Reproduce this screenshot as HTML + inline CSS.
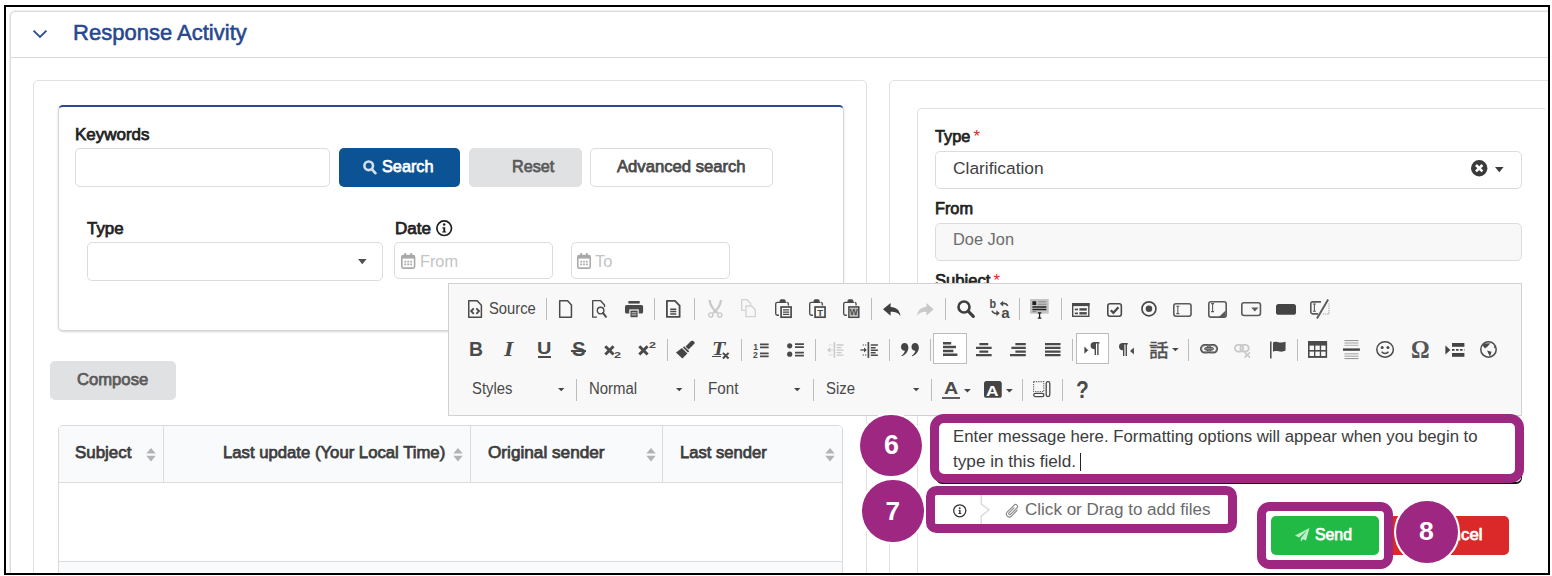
<!DOCTYPE html>
<html lang="en"><head><meta charset="utf-8"><title>Response Activity</title>
<style>
html,body{margin:0;padding:0;background:#fff;}
body{width:1552px;height:576px;overflow:hidden;position:relative;font-family:"Liberation Sans",sans-serif;}
#frame{position:absolute;left:4px;top:5px;width:1546px;height:570px;box-sizing:border-box;border:2px solid #000;z-index:50;pointer-events:none;}
#clip{position:absolute;left:0;top:0;width:1549px;height:574px;overflow:hidden;}
#clip div{position:absolute;box-sizing:border-box;}
.t{position:absolute;white-space:nowrap;line-height:1;display:inline-block;transform-origin:0 50%;}
.i{position:absolute;overflow:visible;}
.card{border:1px solid #e1e1e1;border-radius:5px;background:#fff;}
.inp{border:1px solid #dcdcdc;border-radius:5px;background:#fff;}
.btn{border-radius:5px;}
.sep{background:#bcbcbc;width:1px;}
.on{background:#fff;border:1px solid #bcbcbc;}
.ann{border:9px solid #9d2781;border-radius:10.5px;}
.circ{border-radius:50%;background:#9d2781;box-shadow:0 0 0 2px #fff;}
</style></head><body><div id="clip">
<div style="left:10.00px;top:11.00px;width:1590.00px;height:689.00px;border:1px solid #dcdcdc;border-radius:5px;box-shadow:0 0 0 1px #f0f0f0;background:#fff;"></div>
<div style="left:11.00px;top:57.00px;width:1589.00px;height:1.00px;background:#d9d9d9;"></div>
<svg class="i" style="left:32px;top:29px;width:16px;height:10px" viewBox="0 0 16 10"><path d="M1.5 1.6 L8 8 L14.5 1.6" fill="none" stroke="#34508f" stroke-width="1.9"/></svg>
<span id="title" class="t" style="left:72.80px;top:21.63px;font-size:21.7px;color:#27488f;transform:scaleX(1.0151);-webkit-text-stroke:0.55px #27488f;">Response Activity</span>
<div class="card" style="left:33.00px;top:80.00px;width:834.00px;height:620.00px;"></div>
<div style="left:57.50px;top:105.00px;width:786.00px;height:226.00px;border:1px solid #d6d6d6;border-top:2px solid #2a4893;border-radius:5px;box-shadow:0 1px 2px rgba(34,36,38,.18);background:#fff;"></div>
<span id="kw" class="t" style="left:74.60px;top:126.78px;font-size:16.8px;color:#222;-webkit-text-stroke:0.75px #222;transform:scaleX(1.0110);">Keywords</span>
<div class="inp" style="left:75.00px;top:148.00px;width:255.00px;height:39.00px;"></div>
<div class="btn" style="left:338.75px;top:148.00px;width:121.25px;height:39.00px;background:#0b5394;"></div>
<svg class="i" style="left:362.50px;top:160.00px;width:13.80px;height:14.60px;color:#d3dfec;" viewBox="0 0 13.8 14.6" preserveAspectRatio="none"><circle cx="5.7" cy="5.8" r="4.3" fill="none" stroke="currentColor" stroke-width="2.6"/><path d="M9.2 9.6 L12.4 13.1" fill="none" stroke="currentColor" stroke-width="2.8" stroke-linecap="round"/></svg>
<span id="search" class="t" style="left:382.00px;top:159.18px;font-size:16.8px;color:#fff;-webkit-text-stroke:0.75px #fff;transform:scaleX(0.9686);">Search</span>
<div class="btn" style="left:468.75px;top:148.00px;width:113.25px;height:39.00px;background:#e0e1e2;"></div>
<span id="reset" class="t" style="left:511.60px;top:159.18px;font-size:16.8px;color:#5a5a5a;-webkit-text-stroke:0.75px #5a5a5a;transform:scaleX(0.9648);">Reset</span>
<div class="btn" style="left:590.00px;top:148.00px;width:183.00px;height:39.00px;background:#fff;border:1px solid #dcdcdc;"></div>
<span id="adv" class="t" style="left:616.60px;top:159.18px;font-size:16.8px;color:#4a4a4a;-webkit-text-stroke:0.75px #4a4a4a;transform:scaleX(0.9917);">Advanced search</span>
<span id="type1" class="t" style="left:86.80px;top:221.18px;font-size:16.8px;color:#222;-webkit-text-stroke:0.75px #222;transform:scaleX(1.0058);">Type</span>
<div class="inp" style="left:87.00px;top:242.00px;width:295.50px;height:38.50px;"></div>
<svg class="i" style="left:358.2px;top:259.4px;width:8.6px;height:5.2px" viewBox="0 0 10 6"><path d="M0 0H10L5 6Z" fill="#505050"/></svg>
<span id="date" class="t" style="left:395.20px;top:221.18px;font-size:16.8px;color:#222;-webkit-text-stroke:0.75px #222;transform:scaleX(1.0154);">Date</span>
<svg class="i" style="left:436.20px;top:219.80px;width:16.40px;height:16.40px;color:#1f1f1f;" viewBox="0 0 16.4 16.4" preserveAspectRatio="none"><circle cx="8.2" cy="8.2" r="7.3" fill="none" stroke="currentColor" stroke-width="1.7"/><circle cx="8.2" cy="4.6" r="1.25" fill="currentColor"/><path d="M6.4 7.2 H9.2 V11.4 H10.2 V12.6 H6.2 V11.4 H7.3 V8.4 H6.4 Z" fill="currentColor" /></svg>
<div class="inp" style="left:394.00px;top:242.00px;width:158.50px;height:37.00px;"></div>
<svg class="i" style="left:401.20px;top:253.00px;width:14.40px;height:15.90px;color:#a9a9a9;" viewBox="0 0 14.4 15.9" preserveAspectRatio="none"><rect x="0.8" y="2.6" width="12.8" height="12.5" rx="1.6" fill="none" stroke="currentColor" stroke-width="1.6"/><rect x="0.8" y="2.6" width="12.8" height="3" fill="currentColor"/><rect x="3.2" y="0" width="2" height="3.6" rx="0.8" fill="currentColor"/><rect x="9.2" y="0" width="2" height="3.6" rx="0.8" fill="currentColor"/><path d="M3.4 8.6 H11 M3.4 11.4 H11" stroke="currentColor" stroke-width="1.7" stroke-dasharray="1.8 1.1" fill="none"/></svg>
<span id="from_ph" class="t" style="left:419.60px;top:253.68px;font-size:16.8px;color:#c4c4c4;transform:scaleX(0.9705);">From</span>
<div class="inp" style="left:571.00px;top:242.00px;width:158.50px;height:37.00px;"></div>
<svg class="i" style="left:577.40px;top:253.00px;width:14.00px;height:15.90px;color:#a9a9a9;" viewBox="0 0 14.4 15.9" preserveAspectRatio="none"><rect x="0.8" y="2.6" width="12.8" height="12.5" rx="1.6" fill="none" stroke="currentColor" stroke-width="1.6"/><rect x="0.8" y="2.6" width="12.8" height="3" fill="currentColor"/><rect x="3.2" y="0" width="2" height="3.6" rx="0.8" fill="currentColor"/><rect x="9.2" y="0" width="2" height="3.6" rx="0.8" fill="currentColor"/><path d="M3.4 8.6 H11 M3.4 11.4 H11" stroke="currentColor" stroke-width="1.7" stroke-dasharray="1.8 1.1" fill="none"/></svg>
<span id="to_ph" class="t" style="left:595.20px;top:253.68px;font-size:16.8px;color:#c4c4c4;transform:scaleX(0.9811);">To</span>
<div class="btn" style="left:50.40px;top:361.00px;width:125.35px;height:38.50px;background:#e0e1e2;"></div>
<span id="compose" class="t" style="left:77.00px;top:372.18px;font-size:16.8px;color:#5a5a5a;-webkit-text-stroke:0.75px #5a5a5a;transform:scaleX(0.9913);">Compose</span>
<div style="left:58.00px;top:425.00px;width:785.00px;height:275.00px;border:1px solid #dadada;border-radius:5px;background:#fff;overflow:hidden;"><div style="left:0;top:0;width:100%;height:57px;background:#f9fafb;border-bottom:1px solid #dcdcdc"></div><div style="left:0;top:135px;width:100%;height:200px;background:#f9fafb;border-top:1px solid #dcdcdc"></div></div>
<div style="left:163.00px;top:426.00px;width:1.00px;height:57.00px;background:#dcdcdc;"></div>
<div style="left:470.00px;top:426.00px;width:1.00px;height:57.00px;background:#dcdcdc;"></div>
<div style="left:662.00px;top:426.00px;width:1.00px;height:57.00px;background:#dcdcdc;"></div>
<span id="th1" class="t" style="left:75.30px;top:445.48px;font-size:16.8px;color:#3d3d3d;-webkit-text-stroke:0.75px #3d3d3d;transform:scaleX(1.0074);">Subject</span>
<span id="th2" class="t" style="left:222.60px;top:445.48px;font-size:16.8px;color:#3d3d3d;-webkit-text-stroke:0.75px #3d3d3d;transform:scaleX(0.9952);">Last update (Your Local Time)</span>
<span id="th3" class="t" style="left:487.60px;top:445.48px;font-size:16.8px;color:#3d3d3d;-webkit-text-stroke:0.75px #3d3d3d;transform:scaleX(1.0245);">Original sender</span>
<span id="th4" class="t" style="left:680.20px;top:445.48px;font-size:16.8px;color:#3d3d3d;-webkit-text-stroke:0.75px #3d3d3d;transform:scaleX(0.9897);">Last sender</span>
<svg class="i" style="left:146.25px;top:448px;width:10px;height:13.4px" viewBox="0 0 10 13.4"><path d="M0.3 5.6H9.7L5 0Z M0.3 7.8H9.7L5 13.4Z" fill="#b3b3b3"/></svg>
<svg class="i" style="left:453.25px;top:448px;width:10px;height:13.4px" viewBox="0 0 10 13.4"><path d="M0.3 5.6H9.7L5 0Z M0.3 7.8H9.7L5 13.4Z" fill="#b3b3b3"/></svg>
<svg class="i" style="left:645.75px;top:448px;width:10px;height:13.4px" viewBox="0 0 10 13.4"><path d="M0.3 5.6H9.7L5 0Z M0.3 7.8H9.7L5 13.4Z" fill="#b3b3b3"/></svg>
<svg class="i" style="left:824.5px;top:448px;width:10px;height:13.4px" viewBox="0 0 10 13.4"><path d="M0.3 5.6H9.7L5 0Z M0.3 7.8H9.7L5 13.4Z" fill="#b3b3b3"/></svg>
<div class="card" style="left:889.00px;top:80.00px;width:811.00px;height:620.00px;"></div>
<div class="card" style="left:917.00px;top:108.00px;width:630.00px;height:592.00px;border-right-color:transparent;"></div>
<span id="type2" class="t" style="left:935.20px;top:129.18px;font-size:16.8px;color:#222;-webkit-text-stroke:0.75px #222;transform:scaleX(0.9728);">Type</span>
<span id="ast1" class="t" style="left:973.40px;top:128.78px;font-size:16.8px;color:#db2828;">*</span>
<div class="inp" style="left:935.00px;top:150.50px;width:586.75px;height:38.00px;"></div>
<span id="clar" class="t" style="left:952.80px;top:161.18px;font-size:16.8px;color:#3f3f3f;transform:scaleX(1.0334);">Clarification</span>
<svg class="i" style="left:1471.00px;top:160.00px;width:16.40px;height:16.40px;color:#3a3a3a;" viewBox="0 0 16.4 16.4" preserveAspectRatio="none"><circle cx="8.2" cy="8.2" r="8.2" fill="currentColor"/><path d="M5 5 L11.4 11.4 M11.4 5 L5 11.4" stroke="#fff" stroke-width="2.6"/></svg>
<svg class="i" style="left:1495.2px;top:167px;width:8.6px;height:5.4px" viewBox="0 0 10 6"><path d="M0 0H10L5 6Z" fill="#3c3c3c"/></svg>
<span id="from2" class="t" style="left:935.20px;top:200.98px;font-size:16.8px;color:#222;-webkit-text-stroke:0.75px #222;transform:scaleX(0.9705);">From</span>
<div class="inp" style="left:935.00px;top:222.50px;width:586.75px;height:38.00px;background:#f8f8f8;"></div>
<span id="doe" class="t" style="left:953.20px;top:232.48px;font-size:16.8px;color:#6c6c6c;transform:scaleX(0.9758);">Doe Jon</span>
<span id="subj2" class="t" style="left:935.20px;top:273.18px;font-size:16.8px;color:#222;-webkit-text-stroke:0.75px #222;transform:scaleX(0.9896);">Subject</span>
<span id="ast2" class="t" style="left:993.40px;top:272.78px;font-size:16.8px;color:#db2828;">*</span>
<div style="left:936.00px;top:420.00px;width:585.50px;height:63.50px;border:1px solid #111;border-radius:6px;background:#fff;border-width:1px 1px 2px 1px;"></div>
<div style="left:936.00px;top:496.00px;width:291.00px;height:27.00px;background:#fff;"></div>
<svg class="i" style="left:952.50px;top:503.60px;width:13.50px;height:13.50px;color:#333;" viewBox="0 0 13.4 13.5" preserveAspectRatio="none"><circle cx="6.7" cy="6.75" r="6" fill="none" stroke="currentColor" stroke-width="1.25"/><circle cx="6.7" cy="4.2" r="0.95" fill="currentColor"/><path d="M5.6 6 H7.5 V9 H8.2 V9.9 H5.4 V9 H6.1 V6.9 H5.6 Z" fill="currentColor" /></svg>
<svg class="i" style="left:976px;top:495px;width:16px;height:29px" viewBox="0 0 16 29"><path d="M5.3 0 V9.2 L13 14.8 L5.3 21.2 V29" fill="none" stroke="#dddddd" stroke-width="1.6"/></svg>
<svg class="i" style="left:1006.20px;top:503.70px;width:12.60px;height:13.60px;color:#8a8a8a;" viewBox="0 0 12.6 13.6" preserveAspectRatio="none"><g transform="translate(6.5,6.9) rotate(45)"><path d="M2.9 -3.6 V4.4 A2.9 2.9 0 0 1 -2.9 4.4 V-5.2 A2 2 0 0 1 1.1 -5.2 V3.8 A1.1 1.1 0 0 1 -1.1 3.8 V-3.2" fill="none" stroke="currentColor" stroke-width="1.15" stroke-linecap="round"/></g></svg>
<span id="files" class="t" style="left:1024.60px;top:501.68px;font-size:16.8px;color:#6a6a6a;transform:scaleX(1.0152);">Click or Drag to add files</span>
<div class="btn" style="left:1271.00px;top:516.00px;width:108.00px;height:39.00px;background:#21ba45;"></div>
<svg class="i" style="left:1294.50px;top:528.20px;width:14.50px;height:13.80px;color:#bfeccb;" viewBox="0 0 14.5 13.8" preserveAspectRatio="none"><path d="M14.5 0 L0 7.6 L4 9.4 L12 2.6 L5.8 10.2 V13.8 L8 11.2 L11 12.6 Z" fill="currentColor" /></svg>
<span id="send" class="t" style="left:1315.00px;top:526.68px;font-size:16.8px;color:#fff;-webkit-text-stroke:0.75px #fff;transform:scaleX(0.9438);">Send</span>
<div class="btn" style="left:1384.00px;top:516.00px;width:124.50px;height:39.00px;background:#db2828;"></div>
<span id="cancel" class="t" style="left:1429.60px;top:526.68px;font-size:16.8px;color:#fff;-webkit-text-stroke:0.75px #fff;transform:scaleX(1.0067);">Cancel</span>
<div style="left:448.00px;top:283.00px;width:1074.00px;height:133.00px;background:#f8f8f8;border:1px solid #d1d1d1;"></div>
<svg class="i" style="left:467.75px;top:300.00px;width:14.15px;height:17.90px;color:#4a4a4a;" viewBox="0 0 14.2 17.9" preserveAspectRatio="none"><path d="M0.75 0.75 H9.2 L13.45 5.2 V17.15 H0.75 Z" fill="none" stroke="currentColor" stroke-width="1.5" stroke-linejoin="round"/><path d="M5.8 8.4 L3.2 11.1 L5.8 13.8 M8.4 8.4 L11 11.1 L8.4 13.8" fill="none" stroke="currentColor" stroke-width="1.9" /></svg>
<span id="ck_source" class="t" style="left:488.80px;top:301.29px;font-size:15.6px;color:#484848;transform:scaleX(0.9469);">Source</span>
<div class="sep" style="left:545.50px;top:298.00px;width:1.00px;height:22.00px;"></div>
<svg class="i" style="left:558.75px;top:300.00px;width:13.15px;height:17.90px;color:#4a4a4a;" viewBox="0 0 13.2 17.9" preserveAspectRatio="none"><path d="M0.7 0.7 H8.6 L12.5 5 V17.2 H0.7 Z" fill="none" stroke="currentColor" stroke-width="1.5" stroke-linejoin="round"/></svg>
<svg class="i" style="left:592.10px;top:300.00px;width:14.80px;height:17.90px;color:#4a4a4a;" viewBox="0 0 14.8 17.9" preserveAspectRatio="none"><path d="M12.5 7 V5 L8.6 0.7 H0.7 V17.2 H5" fill="none" stroke="currentColor" stroke-width="1.35" stroke-linejoin="round"/><circle cx="8.6" cy="10.6" r="3.3" fill="none" stroke="currentColor" stroke-width="1.4"/><path d="M10.9 13 L14 16.8" fill="none" stroke="currentColor" stroke-width="2" stroke-linecap="round"/></svg>
<svg class="i" style="left:625.00px;top:301.40px;width:18.10px;height:16.20px;color:#4a4a4a;" viewBox="0 0 18.1 16.2" preserveAspectRatio="none"><rect x="3.4" y="0" width="11.3" height="2.6" fill="currentColor"/><rect x="0" y="4" width="18.1" height="8.6" rx="1.6" fill="currentColor"/><rect x="4.3" y="8.4" width="9.5" height="7.8" fill="#f8f8f8"/><rect x="5.5" y="9.6" width="7.1" height="6.6" fill="currentColor"/><rect x="6.6" y="11.3" width="4.9" height="1" fill="#cfcfcf"/><rect x="6.6" y="13.4" width="4.9" height="1" fill="#cfcfcf"/></svg>
<div class="sep" style="left:654.00px;top:298.00px;width:1.00px;height:22.00px;"></div>
<svg class="i" style="left:666.10px;top:300.10px;width:14.50px;height:17.80px;color:#4a4a4a;" viewBox="0 0 14.5 17.8" preserveAspectRatio="none"><path d="M0.9 0.9 H9 L13.6 5.6 V16.9 H0.9 Z" fill="none" stroke="currentColor" stroke-width="1.8" stroke-linejoin="round"/><path d="M4.2 9.2 H10.3 M4.2 11.6 H10.3 M4.2 14 H10.3" fill="none" stroke="currentColor" stroke-width="1.5" /></svg>
<div class="sep" style="left:694.00px;top:298.00px;width:1.00px;height:22.00px;"></div>
<svg class="i" style="left:708.40px;top:300.10px;width:14.60px;height:17.80px;color:#c9c9c9;" viewBox="0 0 14.6 17.8" preserveAspectRatio="none"><path d="M1.6 0 C2 5 5 9.5 9.6 13.2 M13 0 C12.6 5 9.6 9.5 5 13.2" fill="none" stroke="currentColor" stroke-width="2.3" /><circle cx="2.8" cy="15" r="2.1" fill="none" stroke="currentColor" stroke-width="1.4"/><circle cx="11.8" cy="15" r="2.1" fill="none" stroke="currentColor" stroke-width="1.4"/></svg>
<svg class="i" style="left:740.90px;top:299.25px;width:15.00px;height:18.35px;color:#d2d2d2;" viewBox="0 0 15 18.4" preserveAspectRatio="none"><path d="M4.5 11.5 H0.7 V0.7 H6 L9.5 4.2 V6" fill="none" stroke="currentColor" stroke-width="1.3" /><path d="M5 7 H10.6 L14.3 10.8 V17.7 H5 Z" fill="none" stroke="currentColor" stroke-width="1.3" /></svg>
<svg class="i" style="left:775.00px;top:298.90px;width:16.90px;height:19.00px;color:#4a4a4a;" viewBox="0 0 16.9 19" preserveAspectRatio="none"><path d="M11.5 3.4 H2.3 A1.6 1.6 0 0 0 0.7 5 V14.6 A1.6 1.6 0 0 0 2.3 16.2 H4" fill="none" stroke="currentColor" stroke-width="1.35" /><path d="M12.2 3.4 A1.6 1.6 0 0 1 13.4 5 V6.6" fill="none" stroke="currentColor" stroke-width="1.35" /><rect x="4.6" y="0.2" width="6" height="3.9" rx="1.6" fill="currentColor"/><rect x="6.1" y="8" width="10" height="10.2" fill="#f8f8f8" stroke="currentColor" stroke-width="1.7"/><path d="M8 10.9 H14.2 M8 13.1 H14.2 M8 15.3 H14.2" fill="none" stroke="currentColor" stroke-width="1.3" /></svg>
<svg class="i" style="left:809.25px;top:298.90px;width:16.85px;height:19.00px;color:#4a4a4a;" viewBox="0 0 16.9 19" preserveAspectRatio="none"><path d="M11.5 3.4 H2.3 A1.6 1.6 0 0 0 0.7 5 V14.6 A1.6 1.6 0 0 0 2.3 16.2 H4" fill="none" stroke="currentColor" stroke-width="1.35" /><path d="M12.2 3.4 A1.6 1.6 0 0 1 13.4 5 V6.6" fill="none" stroke="currentColor" stroke-width="1.35" /><rect x="4.6" y="0.2" width="6" height="3.9" rx="1.6" fill="currentColor"/><rect x="6.1" y="8" width="10" height="10.2" fill="#f8f8f8" stroke="currentColor" stroke-width="1.7"/><text x="11.1" y="16.6" font-size="9.6" font-weight="700" text-anchor="middle" font-family="Liberation Sans,sans-serif" fill="currentColor">T</text></svg>
<svg class="i" style="left:843.10px;top:298.90px;width:16.50px;height:19.00px;color:#4a4a4a;" viewBox="0 0 16.9 19" preserveAspectRatio="none"><path d="M11.5 3.4 H2.3 A1.6 1.6 0 0 0 0.7 5 V14.6 A1.6 1.6 0 0 0 2.3 16.2 H4" fill="none" stroke="currentColor" stroke-width="1.35" /><path d="M12.2 3.4 A1.6 1.6 0 0 1 13.4 5 V6.6" fill="none" stroke="currentColor" stroke-width="1.35" /><rect x="4.6" y="0.2" width="6" height="3.9" rx="1.6" fill="currentColor"/><rect x="6.1" y="8" width="10" height="10.2" fill="#f8f8f8" stroke="currentColor" stroke-width="1.7"/><rect x="6.9" y="8.8" width="8.4" height="8.6" fill="#bdbdbd"/><text x="11.1" y="16.4" font-size="8.8" font-weight="700" text-anchor="middle" font-family="Liberation Sans,sans-serif" fill="#4a4a4a">W</text></svg>
<div class="sep" style="left:870.50px;top:298.00px;width:1.00px;height:22.00px;"></div>
<svg class="i" style="left:883.00px;top:302.60px;width:17.50px;height:13.15px;color:#3f3f3f;" viewBox="0 0 17.5 13.2" preserveAspectRatio="none"><path d="M0 6.3 L7.6 0 V3.9 C13.4 3.9 17 7.4 17.5 13.2 C15.4 10 12.6 8.9 7.6 8.9 V12.8 Z" fill="currentColor" /></svg>
<svg class="i" style="left:917.00px;top:302.60px;width:16.60px;height:13.15px;color:#c9c9c9;" viewBox="0 0 17.5 13.2" preserveAspectRatio="none"><path d="M17.5 6.3 L9.9 0 V3.9 C4.1 3.9 0.5 7.4 0 13.2 C2.1 10 4.9 8.9 9.9 8.9 V12.8 Z" fill="currentColor" /></svg>
<div class="sep" style="left:945.00px;top:298.00px;width:1.00px;height:22.00px;"></div>
<svg class="i" style="left:957.00px;top:300.10px;width:17.90px;height:17.90px;color:#3f3f3f;" viewBox="0 0 17.9 17.9" preserveAspectRatio="none"><circle cx="7" cy="7" r="5.5" fill="none" stroke="currentColor" stroke-width="2.6"/><path d="M11.4 11.4 L16.3 16.3" fill="none" stroke="currentColor" stroke-width="3.2" stroke-linecap="round"/></svg>
<svg class="i" style="left:989.90px;top:299.25px;width:19.60px;height:19.65px;color:#4a4a4a;" viewBox="0 0 19.6 19.7" preserveAspectRatio="none"><text x="-0.4" y="9.4" font-size="13" font-weight="700" font-family="Liberation Sans,sans-serif" fill="currentColor" textLength="6.6" lengthAdjust="spacingAndGlyphs">b</text><text x="11.2" y="19.5" font-size="15.5" font-weight="700" font-family="Liberation Sans,sans-serif" fill="currentColor" textLength="8.4" lengthAdjust="spacingAndGlyphs">a</text><path d="M12.6 4.6 C14.8 4 16.8 5 17.8 7" fill="none" stroke="currentColor" stroke-width="1.6" /><path d="M9.8 4.7 L13.2 1.8 V7.6 Z" fill="currentColor" /><path d="M2 11.8 C3 13.9 5 14.9 7.4 14.3" fill="none" stroke="currentColor" stroke-width="1.6" /><path d="M9.8 14.2 L6.4 11.3 V17.1 Z" fill="currentColor" /></svg>
<div class="sep" style="left:1019.25px;top:298.00px;width:1.00px;height:22.00px;"></div>
<svg class="i" style="left:1030.25px;top:299.25px;width:18.75px;height:19.65px;color:#4a4a4a;" viewBox="0 0 18.8 19.6" preserveAspectRatio="none"><rect x="0" y="0" width="18.8" height="14.6" fill="#c3c3c3"/><rect x="2.4" y="2.2" width="3.8" height="3.8" fill="#222"/><path d="M8 2.8 H16.4 M8 5.2 H16.4" stroke="#8a8a8a" stroke-width="1.1"/><path d="M2.4 8 H16.4 M2.4 10.4 H16.4" stroke="#222" stroke-width="1.5"/><path d="M2.4 12.6 H6.4" stroke="#8a8a8a" stroke-width="1.2"/><path d="M9.6 13.6 V18.8 M7.8 13.8 H11.4 M7.8 19 H11.4" stroke="#222" stroke-width="1.3"/></svg>
<div class="sep" style="left:1060.50px;top:298.00px;width:1.00px;height:22.00px;"></div>
<svg class="i" style="left:1071.50px;top:302.60px;width:17.50px;height:14.00px;color:#4a4a4a;" viewBox="0 0 17.5 14" preserveAspectRatio="none"><rect x="0.7" y="0.7" width="16.1" height="12.6" fill="none" stroke="currentColor" stroke-width="1.4"/><rect x="0" y="0" width="17.5" height="3.1" fill="currentColor"/><rect x="2.8" y="5.6" width="3.2" height="1.7" fill="currentColor"/><rect x="7.4" y="5.2" width="7.4" height="2.4" fill="currentColor"/><rect x="2.8" y="9.5" width="3.2" height="1.7" fill="currentColor"/><rect x="7.4" y="9.1" width="7.4" height="2.4" fill="currentColor"/></svg>
<svg class="i" style="left:1107.10px;top:302.60px;width:15.15px;height:14.00px;color:#4a4a4a;" viewBox="0 0 15.1 14" preserveAspectRatio="none"><rect x="0.8" y="0.8" width="13.5" height="12.4" rx="2.2" fill="none" stroke="currentColor" stroke-width="1.6"/><path d="M3.8 7.2 L6.4 9.8 L11.4 4.2" fill="none" stroke="currentColor" stroke-width="2.3" /></svg>
<svg class="i" style="left:1141.00px;top:301.00px;width:15.90px;height:15.60px;color:#4a4a4a;" viewBox="0 0 15.9 15.6" preserveAspectRatio="none"><circle cx="7.95" cy="7.8" r="7" fill="none" stroke="currentColor" stroke-width="1.7"/><circle cx="7.95" cy="7.8" r="3.3" fill="currentColor"/></svg>
<svg class="i" style="left:1173.40px;top:302.60px;width:18.85px;height:14.00px;color:#5a5a5a;" viewBox="0 0 18.8 14" preserveAspectRatio="none"><rect x="0.8" y="0.8" width="17.2" height="12.4" rx="2.2" fill="none" stroke="currentColor" stroke-width="1.6"/><path d="M4.8 3.2 V10.6 M3.3 3.2 H6.3 M3.3 10.6 H6.3" stroke="currentColor" stroke-width="1.1" fill="none"/></svg>
<svg class="i" style="left:1207.90px;top:301.00px;width:19.00px;height:16.90px;color:#5a5a5a;" viewBox="0 0 19 16.9" preserveAspectRatio="none"><rect x="0.8" y="0.8" width="17.4" height="15.3" rx="2.2" fill="none" stroke="currentColor" stroke-width="1.6"/><path d="M4.6 2.6 V10.6 M3.0999999999999996 2.6 H6.1 M3.0999999999999996 10.6 H6.1" stroke="currentColor" stroke-width="1.1" fill="none"/><path d="M17.6 9.6 V16.3 H10.6 Z" fill="currentColor" /></svg>
<svg class="i" style="left:1241.00px;top:302.25px;width:20.25px;height:14.35px;color:#5a5a5a;" viewBox="0 0 20.2 14.4" preserveAspectRatio="none"><rect x="0.8" y="0.8" width="18.6" height="12.8" rx="2.2" fill="none" stroke="currentColor" stroke-width="1.6"/><path d="M10.2 5.4 H17.4 L13.8 9.6 Z" fill="currentColor" /></svg>
<svg class="i" style="left:1275.60px;top:303.50px;width:20.00px;height:10.75px;color:#444;" viewBox="0 0 20 10.8" preserveAspectRatio="none"><rect x="0" y="0" width="20" height="10.8" rx="2.6" fill="currentColor"/></svg>
<svg class="i" style="left:1310.00px;top:299.25px;width:19.75px;height:19.65px;color:#5a5a5a;" viewBox="0 0 19.8 19.6" preserveAspectRatio="none"><path d="M11 2.9 H2.6 A1.8 1.8 0 0 0 0.8 4.7 V13 A1.8 1.8 0 0 0 2.6 14.8 H8" fill="none" stroke="currentColor" stroke-width="1.6" /><path d="M4.4 5 V12.2 M2.9000000000000004 5 H5.9 M2.9000000000000004 12.2 H5.9" stroke="currentColor" stroke-width="1.1" fill="none"/><path d="M18.2 0.4 L7 19.4" fill="none" stroke="currentColor" stroke-width="1.9" /><path d="M13 15 H19 V4" fill="none" stroke="#9a9a9a" stroke-width="1" stroke-dasharray="1.2 1"/></svg>
<span id="ck_b" class="t" style="left:469.30px;top:339.23px;font-size:20.4px;color:#4a4a4a;font-weight:700;transform:scaleX(0.9502);">B</span>
<span id="ck_i" class="t" style="left:504.20px;top:339.23px;font-size:20.4px;color:#4a4a4a;font-weight:700;transform:scaleX(1.1843);font-family:'Liberation Serif',serif;font-style:italic;">I</span>
<span id="ck_u" class="t" style="left:537.30px;top:339.94px;font-size:17.2px;color:#4a4a4a;font-weight:700;transform:scaleX(1.1592);">U</span>
<div style="left:538.00px;top:356.30px;width:12.90px;height:1.60px;background:#4a4a4a;"></div>
<span id="ck_s" class="t" style="left:571.60px;top:339.03px;font-size:20.4px;color:#4a4a4a;font-weight:700;transform:scaleX(0.9993);">S</span>
<div style="left:571.20px;top:350.00px;width:15.10px;height:1.50px;background:#4a4a4a;"></div>
<svg class="i" style="left:603.75px;top:344.50px;width:10.85px;height:10.90px;color:#4a4a4a;" viewBox="0 0 10 10" preserveAspectRatio="none"><path d="M1.2 1.2 L8.8 8.8 M8.8 1.2 L1.2 8.8" fill="none" stroke="currentColor" stroke-width="2.7" /></svg>
<span id="ck_sub2" class="t" style="left:614.40px;top:350.69px;font-size:8.4px;color:#4a4a4a;font-weight:700;transform:scaleX(1.4983);">2</span>
<svg class="i" style="left:638.10px;top:345.00px;width:10.90px;height:10.75px;color:#4a4a4a;" viewBox="0 0 10 10" preserveAspectRatio="none"><path d="M1.2 1.2 L8.8 8.8 M8.8 1.2 L1.2 8.8" fill="none" stroke="currentColor" stroke-width="2.7" /></svg>
<span id="ck_sup2" class="t" style="left:648.70px;top:341.09px;font-size:8.4px;color:#4a4a4a;font-weight:700;transform:scaleX(1.4983);">2</span>
<div class="sep" style="left:666.50px;top:338.60px;width:1.00px;height:22.00px;"></div>
<svg class="i" style="left:675.90px;top:339.50px;width:19.35px;height:18.40px;color:#444;" viewBox="0 0 19.4 18.4" preserveAspectRatio="none"><path d="M14.8 1.2 C16 -0.3 19.6 1.6 18.6 3.6 L12.6 9.6 L9.6 6.6 Z" fill="currentColor" /><path d="M8.2 6.2 L13.2 11.2 L12 12.4 L7 7.4 Z" fill="currentColor" /><path d="M6 8 L11.4 13.4 L6.4 18.4 L0 12.4 Z" fill="currentColor" /></svg>
<span id="ck_tx" class="t" style="left:711.60px;top:340.42px;font-size:18.4px;color:#4a4a4a;font-weight:700;transform:scaleX(1.1928);font-family:'Liberation Serif',serif;font-style:italic;">T</span>
<div style="left:711.80px;top:355.50px;width:8.80px;height:1.60px;background:#4a4a4a;"></div>
<svg class="i" style="left:721.50px;top:351.50px;width:7.50px;height:7.40px;color:#4a4a4a;" viewBox="0 0 10 10" preserveAspectRatio="none"><path d="M1.2 1.2 L8.8 8.8 M8.8 1.2 L1.2 8.8" fill="none" stroke="currentColor" stroke-width="2.7" /></svg>
<div class="sep" style="left:740.75px;top:338.60px;width:1.00px;height:22.00px;"></div>
<svg class="i" style="left:752.75px;top:342.60px;width:15.65px;height:15.30px;color:#4a4a4a;" viewBox="0 0 15.7 15.3" preserveAspectRatio="none"><path d="M7 1.4 H15.7 M7 4.4 H15.7 M7 10.4 H15.7 M7 13.4 H15.7" fill="none" stroke="currentColor" stroke-width="1.7" /><text x="0.2" y="6.6" font-size="8.6" font-weight="700" font-family="Liberation Sans,sans-serif" fill="currentColor">1</text><text x="0" y="15.2" font-size="8.6" font-weight="700" font-family="Liberation Sans,sans-serif" fill="currentColor">2</text></svg>
<svg class="i" style="left:787.10px;top:342.90px;width:16.90px;height:14.10px;color:#4a4a4a;" viewBox="0 0 16.9 14.1" preserveAspectRatio="none"><path d="M8 1.2 H16.9 M8 4.2 H16.9 M8 9.6 H16.9 M8 12.6 H16.9" fill="none" stroke="currentColor" stroke-width="1.7" /><circle cx="2.7" cy="2.8" r="2.6" fill="currentColor"/><circle cx="2.7" cy="11.2" r="2.6" fill="currentColor"/></svg>
<div class="sep" style="left:815.00px;top:338.60px;width:1.00px;height:22.00px;"></div>
<svg class="i" style="left:827.10px;top:342.00px;width:16.90px;height:15.90px;color:#c9c9c9;" viewBox="0 0 16.9 15.9" preserveAspectRatio="none"><path d="M7.4 0 V15.9" fill="none" stroke="currentColor" stroke-width="1.5" /><path d="M9.6 3 H16.5 M9.6 5.7 H14.5 M9.6 8.2 H16.5 M9.6 10.7 H14.5 M9.6 13.2 H16.5" fill="none" stroke="currentColor" stroke-width="1.3" /><path d="M6 8 H2 M3.4 6 L1 8 L3.4 10" fill="none" stroke="currentColor" stroke-width="1.2" /><path d="M2 3 H5.6 M2 13 H5.6" stroke="currentColor" stroke-width="1.1" stroke-dasharray="1.2 1.1" fill="none"/></svg>
<svg class="i" style="left:860.10px;top:342.00px;width:18.30px;height:15.90px;color:#4a4a4a;" viewBox="0 0 18.3 15.9" preserveAspectRatio="none"><path d="M8.4 0 V15.9" fill="none" stroke="currentColor" stroke-width="1.7" /><path d="M10.8 3 H17.9 M10.8 5.7 H15.6 M10.8 8.2 H17.9 M10.8 10.7 H15.6 M10.8 13.2 H17.9" fill="none" stroke="currentColor" stroke-width="1.5" /><path d="M0.4 8 H5.6" fill="none" stroke="currentColor" stroke-width="1.3" /><path d="M4 5.6 L6.8 8 L4 10.4 Z" fill="currentColor" /><path d="M2.6 3 H6.4 M2.6 13 H6.4" stroke="currentColor" stroke-width="1.2" stroke-dasharray="1.3 1.1" fill="none"/></svg>
<div class="sep" style="left:889.25px;top:338.60px;width:1.00px;height:22.00px;"></div>
<svg class="i" style="left:900.75px;top:343.25px;width:17.85px;height:13.35px;color:#444;" viewBox="0 0 17.9 13.4" preserveAspectRatio="none"><path d="M3.6 0 C5.9 0 7.4 1.9 7.4 4.6 C7.4 8.4 4.8 11.6 1 13.4 L0.4 12.6 C2.4 11.2 3.6 9.6 3.9 7.8 C1.6 7.8 0 6.2 0 4 C0 1.6 1.6 0 3.6 0 Z" fill="currentColor" /><path d="M14.1 0 C16.4 0 17.9 1.9 17.9 4.6 C17.9 8.4 15.3 11.6 11.5 13.4 L10.9 12.6 C12.9 11.2 14.1 9.6 14.4 7.8 C12.1 7.8 10.5 6.2 10.5 4 C10.5 1.6 12.1 0 14.1 0 Z" fill="currentColor" /></svg>
<div class="sep" style="left:929.75px;top:338.60px;width:1.00px;height:22.00px;"></div>
<div class="on" style="left:933.00px;top:333.25px;width:33.75px;height:30.75px;"></div>
<svg class="i" style="left:942.60px;top:342.40px;width:14.40px;height:14.20px;color:#4a4a4a;" viewBox="0 0 14.4 14.2" preserveAspectRatio="none"><path d="M0 1.3 H8.2 M0 5.1 H13 M0 9 H10.4 M0 12.8 H14.4" fill="none" stroke="currentColor" stroke-width="2.5" /></svg>
<svg class="i" style="left:975.75px;top:343.25px;width:15.65px;height:13.35px;color:#4a4a4a;" viewBox="0 0 15.6 13.4" preserveAspectRatio="none"><path d="M3.4 1.2 H12.2 M0 4.9 H15.6 M3.4 8.6 H12.2 M0 12.2 H15.6" fill="none" stroke="currentColor" stroke-width="2.3" /></svg>
<svg class="i" style="left:1010.10px;top:343.25px;width:15.80px;height:13.35px;color:#4a4a4a;" viewBox="0 0 15.8 13.4" preserveAspectRatio="none"><path d="M5.4 1.2 H15.8 M1.4 4.9 H15.8 M5.4 8.6 H15.8 M0 12.2 H15.8" fill="none" stroke="currentColor" stroke-width="2.3" /></svg>
<svg class="i" style="left:1044.75px;top:343.25px;width:15.50px;height:13.35px;color:#4a4a4a;" viewBox="0 0 15.5 13.4" preserveAspectRatio="none"><path d="M0 1.2 H15.5 M0 4.9 H15.5 M0 8.6 H15.5 M0 12.2 H15.5" fill="none" stroke="currentColor" stroke-width="2.3" /></svg>
<div class="sep" style="left:1071.75px;top:338.60px;width:1.00px;height:22.00px;"></div>
<div class="on" style="left:1076.25px;top:333.25px;width:32.75px;height:30.75px;"></div>
<svg class="i" style="left:1084.40px;top:342.00px;width:15.60px;height:13.10px;color:#4a4a4a;" viewBox="0 0 15.6 13.1" preserveAspectRatio="none"><path d="M0.4 4.6 L4.2 8.2 L0.4 11.8 Z" fill="currentColor" /><path d="M10.2 0 H15.4 V1.6 H14.6 V13 H13.2 V1.6 H12.0 V13 H10.6 V7.2 H10.2 A3.6 3.6 0 0 1 10.2 0 Z" fill="currentColor"/></svg>
<svg class="i" style="left:1118.75px;top:342.90px;width:15.25px;height:12.50px;color:#4a4a4a;" viewBox="0 0 15.3 12.5" preserveAspectRatio="none"><path d="M3.6 0 H8.8 V1.6 H8 V13 H6.6 V1.6 H5.4 V13 H4 V7.2 H3.6 A3.6 3.6 0 0 1 3.6 0 Z" fill="currentColor"/><path d="M14.9 4.4 L11.1 8 L14.9 11.6 Z" fill="currentColor" /></svg>
<span id="ck_lang" class="t" style="left:1148.60px;top:340.02px;font-size:18.4px;color:#505050;transform:scaleX(1.0649);-webkit-text-stroke:0.35px #505050;font-family:'Noto Sans CJK JP',sans-serif;">話</span>
<svg class="i" style="left:1172.25px;top:347.6px;width:6.75px;height:3.3px" viewBox="0 0 10 5"><path d="M0 0H10L5 5Z" fill="#444"/></svg>
<div class="sep" style="left:1187.75px;top:338.60px;width:1.00px;height:22.00px;"></div>
<svg class="i" style="left:1200.00px;top:343.90px;width:18.10px;height:9.60px;color:#505050;" viewBox="0 0 18.1 9.6" preserveAspectRatio="none"><rect x="1" y="1" width="9.8" height="7.6" rx="3.8" fill="none" stroke="currentColor" stroke-width="2"/><rect x="7.3" y="1" width="9.8" height="7.6" rx="3.8" fill="none" stroke="currentColor" stroke-width="2"/><rect x="1.7" y="1.7" width="8.4" height="6.2" rx="3.1" fill="none" stroke="#9a9a9a" stroke-width="0.8"/><rect x="8" y="1.7" width="8.4" height="6.2" rx="3.1" fill="none" stroke="#9a9a9a" stroke-width="0.8"/><rect x="4.6" y="3.6" width="8.9" height="2.4" rx="1.2" fill="#8c8c8c" stroke="currentColor" stroke-width="0.9"/></svg>
<svg class="i" style="left:1234.40px;top:343.90px;width:16.85px;height:14.00px;color:#c9c9c9;" viewBox="0 0 16.9 14" preserveAspectRatio="none"><rect x="0.9" y="0.9" width="8.4" height="6.6" rx="3.3" fill="none" stroke="currentColor" stroke-width="1.8"/><rect x="6.4" y="0.9" width="8.4" height="6.6" rx="3.3" fill="none" stroke="currentColor" stroke-width="1.8"/><path d="M10.6 8.4 L16 13.6 M16 8.4 L10.6 13.6" fill="none" stroke="currentColor" stroke-width="1.5" /></svg>
<svg class="i" style="left:1270.00px;top:340.50px;width:16.25px;height:17.40px;color:#4a4a4a;" viewBox="0 0 16.3 17.4" preserveAspectRatio="none"><path d="M0.8 0.4 V17.4" fill="none" stroke="currentColor" stroke-width="1.5" /><path d="M3 1.4 C6.4 -0.6 9.6 3 15.6 0.8 V9.6 C10.6 12.4 6.8 8.4 3 10.6 Z" fill="currentColor" /></svg>
<div class="sep" style="left:1296.75px;top:338.60px;width:1.00px;height:22.00px;"></div>
<svg class="i" style="left:1307.75px;top:341.00px;width:19.15px;height:16.90px;color:#4a4a4a;" viewBox="0 0 19.2 16.9" preserveAspectRatio="none"><rect x="0" y="0" width="19.2" height="16.9" fill="currentColor"/><rect x="1.6" y="4.6" width="4.4" height="4.4" fill="#f8f8f8"/><rect x="7.4" y="4.6" width="4.4" height="4.4" fill="#f8f8f8"/><rect x="13.2" y="4.6" width="4.4" height="4.4" fill="#f8f8f8"/><rect x="1.6" y="10.6" width="4.4" height="4.4" fill="#f8f8f8"/><rect x="7.4" y="10.6" width="4.4" height="4.4" fill="#f8f8f8"/><rect x="13.2" y="10.6" width="4.4" height="4.4" fill="#f8f8f8"/></svg>
<svg class="i" style="left:1343.10px;top:339.90px;width:16.90px;height:19.20px;color:#444;" viewBox="0 0 16.9 19.2" preserveAspectRatio="none"><path d="M1.4 0.6 H15.5 M1.4 18.6 H15.5" stroke="#8f8f8f" stroke-width="1"/><path d="M1.4 3 H15.5 M1.4 5.4 H15.5 M1.4 13.8 H15.5 M1.4 16.2 H15.5" stroke="#bdbdbd" stroke-width="1.4"/><path d="M0 9.6 H16.9" fill="none" stroke="currentColor" stroke-width="2.4" /></svg>
<svg class="i" style="left:1376.25px;top:341.00px;width:18.15px;height:16.90px;color:#4a4a4a;" viewBox="0 0 18.2 16.9" preserveAspectRatio="none"><ellipse cx="9.1" cy="8.45" rx="8.3" ry="7.7" fill="none" stroke="currentColor" stroke-width="1.5"/><circle cx="6.2" cy="6.4" r="1.5" fill="currentColor"/><circle cx="12" cy="6.4" r="1.5" fill="currentColor"/><path d="M5.6 10.8 C7.6 13 10.6 13 12.6 10.8" fill="none" stroke="currentColor" stroke-width="1.4" /></svg>
<span id="ck_omega" class="t" style="left:1411.30px;top:336.73px;font-size:25px;color:#555;font-weight:700;transform:scaleX(0.9285);font-family:'Liberation Serif',serif;">Ω</span>
<svg class="i" style="left:1445.00px;top:343.10px;width:19.40px;height:13.80px;color:#444;" viewBox="0 0 19.4 13.8" preserveAspectRatio="none"><path d="M0.4 2.4 L5.4 6.9 L0.4 11.4 Z" fill="currentColor" /><rect x="7" y="0" width="12.4" height="3.8" fill="currentColor"/><rect x="7" y="10" width="12.4" height="3.8" fill="currentColor"/><path d="M7 6.9 H19.4" stroke="currentColor" stroke-width="1.7" stroke-dasharray="2.6 1.4" fill="none"/></svg>
<svg class="i" style="left:1479.60px;top:341.00px;width:17.00px;height:16.90px;color:#4a4a4a;" viewBox="0 0 17 16.9" preserveAspectRatio="none"><ellipse cx="8.5" cy="8.45" rx="7.7" ry="7.7" fill="none" stroke="currentColor" stroke-width="1.5"/><path d="M3.4 2.6 L10.4 2.2 L7.6 5.6 L5 7.6 L3 5 Z" fill="currentColor" /><path d="M7 9.4 L11.6 10.8 L10 15.6 L8.6 13 Z" fill="currentColor" /><path d="M13.8 4.2 L15.4 6.6 L14.2 7.4 Z" fill="currentColor" /></svg>
<span id="ck_styles" class="t" style="left:471.60px;top:381.29px;font-size:15.6px;color:#484848;transform:scaleX(0.9513);">Styles</span>
<svg class="i" style="left:558px;top:388.3px;width:6.4px;height:3.3px" viewBox="0 0 10 5"><path d="M0 0H10L5 5Z" fill="#444"/></svg>
<div class="sep" style="left:575.50px;top:378.80px;width:1.00px;height:22.00px;"></div>
<span id="ck_normal" class="t" style="left:589.40px;top:381.29px;font-size:15.6px;color:#484848;transform:scaleX(0.9589);">Normal</span>
<svg class="i" style="left:675.5px;top:388.3px;width:6.4px;height:3.3px" viewBox="0 0 10 5"><path d="M0 0H10L5 5Z" fill="#444"/></svg>
<div class="sep" style="left:694.25px;top:378.80px;width:1.00px;height:22.00px;"></div>
<span id="ck_font" class="t" style="left:707.60px;top:381.29px;font-size:15.6px;color:#484848;transform:scaleX(0.9743);">Font</span>
<svg class="i" style="left:794.25px;top:388.3px;width:6.4px;height:3.3px" viewBox="0 0 10 5"><path d="M0 0H10L5 5Z" fill="#444"/></svg>
<div class="sep" style="left:813.00px;top:378.80px;width:1.00px;height:22.00px;"></div>
<span id="ck_size" class="t" style="left:826.40px;top:381.29px;font-size:15.6px;color:#484848;transform:scaleX(0.9557);">Size</span>
<svg class="i" style="left:913px;top:388.3px;width:6.4px;height:3.3px" viewBox="0 0 10 5"><path d="M0 0H10L5 5Z" fill="#444"/></svg>
<div class="sep" style="left:930.50px;top:378.80px;width:1.00px;height:22.00px;"></div>
<span id="ck_a" class="t" style="left:943.60px;top:380.48px;font-size:16.2px;color:#4a4a4a;font-weight:700;transform:scaleX(1.2134);">A</span>
<div style="left:941.90px;top:396.50px;width:18.35px;height:2.25px;background:#5e5e5e;"></div>
<svg class="i" style="left:963.9px;top:388.8px;width:6.8px;height:3.5px" viewBox="0 0 10 5"><path d="M0 0H10L5 5Z" fill="#444"/></svg>
<svg class="i" style="left:983.75px;top:381.00px;width:17.75px;height:16.75px;color:#444;" viewBox="0 0 17.8 16.8" preserveAspectRatio="none"><rect x="0" y="0" width="17.8" height="16.8" rx="2.6" fill="currentColor"/></svg>
<span id="ck_a2" class="t" style="left:986.40px;top:383.00px;font-size:15px;color:#fff;font-weight:700;transform:scaleX(1.1620);">A</span>
<svg class="i" style="left:1006px;top:388.8px;width:6.8px;height:3.5px" viewBox="0 0 10 5"><path d="M0 0H10L5 5Z" fill="#444"/></svg>
<div class="sep" style="left:1021.50px;top:378.80px;width:1.00px;height:22.00px;"></div>
<svg class="i" style="left:1032.50px;top:381.25px;width:17.50px;height:16.25px;color:#4a4a4a;" viewBox="0 0 17.5 16.3" preserveAspectRatio="none"><rect x="0.6" y="0.6" width="10.2" height="10" fill="none" stroke="#666" stroke-width="1.1" stroke-dasharray="1.3 1"/><rect x="0.7" y="12.4" width="10.2" height="3.2" rx="1.6" fill="none" stroke="currentColor" stroke-width="1.3"/><rect x="13.2" y="0.7" width="3.6" height="14.9" rx="1.8" fill="none" stroke="currentColor" stroke-width="1.3"/></svg>
<div class="sep" style="left:1061.50px;top:378.80px;width:1.00px;height:22.00px;"></div>
<span id="ck_q" class="t" style="left:1076.20px;top:379.23px;font-size:23px;color:#4a4a4a;font-weight:700;transform:scaleX(0.9102);">?</span>
<div class="ann" style="left:930.00px;top:414.25px;width:594.00px;height:68.25px;background:#fff;border-radius:14px;"></div>
<span id="msg1" class="t" style="left:953.20px;top:429.08px;font-size:16.8px;color:#3c3c3c;transform:scaleX(0.9989);">Enter message here. Formatting options will appear when you begin to</span>
<span id="msg2" class="t" style="left:953.20px;top:453.58px;font-size:16.8px;color:#3c3c3c;transform:scaleX(1.0221);">type in this field.</span>
<div style="left:1080.30px;top:452.50px;width:1.20px;height:18.00px;background:#222;"></div>
<div class="ann" style="left:926.25px;top:486.25px;width:310.25px;height:46.25px;"></div>
<div class="ann" style="left:1257.00px;top:502.25px;width:135.75px;height:66.50px;border-radius:12.5px;"></div>
<div class="circ" style="left:860.25px;top:414.85px;width:61.50px;height:61.50px;"></div>
<span id="c6" class="t" style="left:871.40px;width:40px;text-align:center;top:431.81px;font-size:26.8px;color:#fff;font-weight:700;">6</span>
<div class="circ" style="left:862.25px;top:480.45px;width:61.50px;height:61.50px;"></div>
<span id="c7" class="t" style="left:872.70px;width:40px;text-align:center;top:497.82px;font-size:26.2px;color:#fff;font-weight:700;">7</span>
<div class="circ" style="left:1395.50px;top:501.00px;width:62.00px;height:62.00px;"></div>
<span id="c8" class="t" style="left:1406.40px;width:40px;text-align:center;top:517.98px;font-size:26.6px;color:#fff;font-weight:700;">8</span>
</div><div id="frame"></div></body></html>
